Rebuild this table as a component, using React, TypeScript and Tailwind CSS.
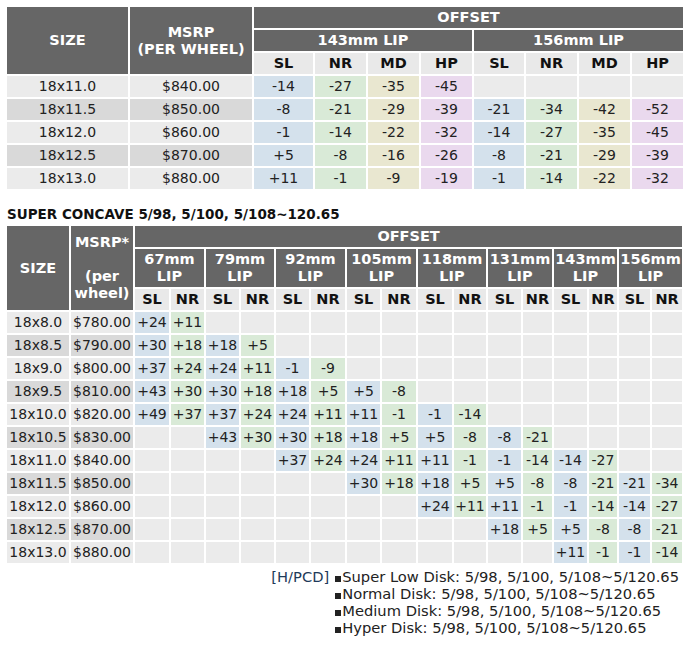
import React from "react";

type Cell = string | null;

const SL = "bg-[#d4e1ec]";
const NR = "bg-[#d9ead7]";
const MD = "bg-[#e9e7d0]";
const HP = "bg-[#ead9ee]";
const EMPTY = "bg-[#ebebeb]";

const head = "bg-[#666666] text-white font-bold text-[14.5px] leading-[17px] text-center align-middle p-0";
const sub = "bg-[#e9e9e9] text-[#111] font-bold text-[14.5px] leading-[17px] text-center h-[21px] p-0";
const data = "text-[14px] leading-[17px] text-center h-[21px] p-0 whitespace-nowrap";

const lipRows: { size: string; price: string; vals: Cell[] }[] = [
  { size: "18x11.0", price: "$840.00", vals: ["-14", "-27", "-35", "-45", null, null, null, null] },
  { size: "18x11.5", price: "$850.00", vals: ["-8", "-21", "-29", "-39", "-21", "-34", "-42", "-52"] },
  { size: "18x12.0", price: "$860.00", vals: ["-1", "-14", "-22", "-32", "-14", "-27", "-35", "-45"] },
  { size: "18x12.5", price: "$870.00", vals: ["+5", "-8", "-16", "-26", "-8", "-21", "-29", "-39"] },
  { size: "18x13.0", price: "$880.00", vals: ["+11", "-1", "-9", "-19", "-1", "-14", "-22", "-32"] },
];

const _ = null;
const concaveRows: { size: string; price: string; vals: Cell[] }[] = [
  { size: "18x8.0", price: "$780.00", vals: ["+24", "+11", _, _, _, _, _, _, _, _, _, _, _, _, _, _] },
  { size: "18x8.5", price: "$790.00", vals: ["+30", "+18", "+18", "+5", _, _, _, _, _, _, _, _, _, _, _, _] },
  { size: "18x9.0", price: "$800.00", vals: ["+37", "+24", "+24", "+11", "-1", "-9", _, _, _, _, _, _, _, _, _, _] },
  { size: "18x9.5", price: "$810.00", vals: ["+43", "+30", "+30", "+18", "+18", "+5", "+5", "-8", _, _, _, _, _, _, _, _] },
  { size: "18x10.0", price: "$820.00", vals: ["+49", "+37", "+37", "+24", "+24", "+11", "+11", "-1", "-1", "-14", _, _, _, _, _, _] },
  { size: "18x10.5", price: "$830.00", vals: [_, _, "+43", "+30", "+30", "+18", "+18", "+5", "+5", "-8", "-8", "-21", _, _, _, _] },
  { size: "18x11.0", price: "$840.00", vals: [_, _, _, _, "+37", "+24", "+24", "+11", "+11", "-1", "-1", "-14", "-14", "-27", _, _] },
  { size: "18x11.5", price: "$850.00", vals: [_, _, _, _, _, _, "+30", "+18", "+18", "+5", "+5", "-8", "-8", "-21", "-21", "-34"] },
  { size: "18x12.0", price: "$860.00", vals: [_, _, _, _, _, _, _, _, "+24", "+11", "+11", "-1", "-1", "-14", "-14", "-27"] },
  { size: "18x12.5", price: "$870.00", vals: [_, _, _, _, _, _, _, _, _, _, "+18", "+5", "+5", "-8", "-8", "-21"] },
  { size: "18x13.0", price: "$880.00", vals: [_, _, _, _, _, _, _, _, _, _, _, _, "+11", "-1", "-1", "-14"] },
];

const lips = ["67mm", "79mm", "92mm", "105mm", "118mm", "131mm", "143mm", "156mm"];
const concaveWidths = [34, 33, 33, 33, 33, 34, 33, 34, 34, 32, 33, 29, 33, 28, 31, 30];
const lipWidths = [59, 51, 51, 51, 50, 51, 51, 51];

function rowBg(i: number) {
  return i % 2 === 0 ? "bg-[#ebebeb]" : "bg-[#d9d9d9]";
}

export default function App() {
  return (
    <div className="bg-white w-[693px] h-[648px] text-[#222] font-['DejaVu_Sans',Verdana,sans-serif]">
      {/* 143 / 156mm lip table */}
      <table className="table-fixed border-separate border-spacing-[2px] ml-[5px] mt-[5px] w-[680px]">
        <colgroup>
          <col style={{ width: 121 }} />
          <col style={{ width: 122 }} />
          {lipWidths.map((w, i) => (
            <col key={i} style={{ width: w }} />
          ))}
        </colgroup>
        <thead>
          <tr>
            <th rowSpan={3} className={head}>SIZE</th>
            <th rowSpan={3} className={head}>MSRP<br />(PER WHEEL)</th>
            <th colSpan={8} className={`${head} h-[21px]`}>OFFSET</th>
          </tr>
          <tr>
            <th colSpan={4} className={`${head} h-[21px]`}>143mm LIP</th>
            <th colSpan={4} className={`${head} h-[21px]`}>156mm LIP</th>
          </tr>
          <tr>
            {["SL", "NR", "MD", "HP", "SL", "NR", "MD", "HP"].map((t, i) => (
              <th key={i} className={sub}>{t}</th>
            ))}
          </tr>
        </thead>
        <tbody>
          {lipRows.map((r, i) => (
            <tr key={r.size}>
              <td className={`${data} ${rowBg(i)}`}>{r.size}</td>
              <td className={`${data} ${rowBg(i)}`}>{r.price}</td>
              {r.vals.map((v, j) => (
                <td key={j} className={`${data} ${v === null ? EMPTY : [SL, NR, MD, HP][j % 4]}`}>
                  {v}
                </td>
              ))}
            </tr>
          ))}
        </tbody>
      </table>

      <div className="mt-[15px] ml-[7px] text-[13.5px] leading-[17px] font-bold text-[#111] whitespace-nowrap">
        SUPER CONCAVE 5/98, 5/100, 5/108~120.65
      </div>

      {/* super concave table */}
      <table className="table-fixed border-separate border-spacing-[2px] ml-[5px] mt-[1px] w-[679px]">
        <colgroup>
          <col style={{ width: 62 }} />
          <col style={{ width: 62 }} />
          {concaveWidths.map((w, i) => (
            <col key={i} style={{ width: w }} />
          ))}
        </colgroup>
        <thead>
          <tr>
            <th rowSpan={3} className={head}>SIZE</th>
            <th rowSpan={3} className={head}>
              MSRP*<br /><br />(per wheel)
            </th>
            <th colSpan={16} className={`${head} h-[21px]`}>OFFSET</th>
          </tr>
          <tr>
            {lips.map((l) => (
              <th key={l} colSpan={2} className={`${head} h-[38px]`}>
                {l}<br />LIP
              </th>
            ))}
          </tr>
          <tr>
            {lips.flatMap((l) => [
              <th key={l + "sl"} className={sub}>SL</th>,
              <th key={l + "nr"} className={sub}>NR</th>,
            ])}
          </tr>
        </thead>
        <tbody>
          {concaveRows.map((r, i) => (
            <tr key={r.size}>
              <td className={`${data} ${rowBg(i)}`}>{r.size}</td>
              <td className={`${data} ${rowBg(i)}`}>{r.price}</td>
              {r.vals.map((v, j) => (
                <td key={j} className={`${data} ${v === null ? EMPTY : j % 2 === 0 ? SL : NR}`}>
                  {v}
                </td>
              ))}
            </tr>
          ))}
        </tbody>
      </table>

      {/* PCD notes */}
      <div className="flex justify-end pr-[14px] mt-[3px] text-[14.7px] leading-[17px] whitespace-nowrap">
        <span className="text-[#1e3a5a] mr-[6px]">[H/PCD]</span>
        <div className="flex flex-col">
          {["Super Low Disk", "Normal Disk", "Medium Disk", "Hyper Disk"].map((d) => (
            <div key={d} className="flex items-baseline">
              <span className="inline-block w-[6px] h-[6px] bg-[#222] mr-[1px]" />
              <span>{d}: 5/98, 5/100, 5/108~5/120.65</span>
            </div>
          ))}
        </div>
      </div>
    </div>
  );
}
